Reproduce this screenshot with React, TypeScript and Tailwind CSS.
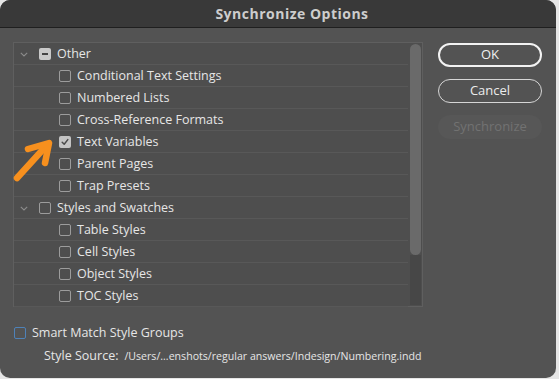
import React from 'react';

type Row = { label: string; level: 0 | 1; state: 'none' | 'checked' | 'mixed' };

const rows: Row[] = [
  { label: 'Other', level: 0, state: 'mixed' },
  { label: 'Conditional Text Settings', level: 1, state: 'none' },
  { label: 'Numbered Lists', level: 1, state: 'none' },
  { label: 'Cross-Reference Formats', level: 1, state: 'none' },
  { label: 'Text Variables', level: 1, state: 'checked' },
  { label: 'Parent Pages', level: 1, state: 'none' },
  { label: 'Trap Presets', level: 1, state: 'none' },
  { label: 'Styles and Swatches', level: 0, state: 'none' },
  { label: 'Table Styles', level: 1, state: 'none' },
  { label: 'Cell Styles', level: 1, state: 'none' },
  { label: 'Object Styles', level: 1, state: 'none' },
  { label: 'TOC Styles', level: 1, state: 'none' },
];

const Box = ({ state }: { state: Row['state'] }) => {
  if (state === 'mixed')
    return (
      <span className="w-[12px] h-[12px] rounded-[2px] bg-[#c9c9c9] flex items-center justify-center">
        <span className="w-[6px] h-[2px] bg-[#444]" />
      </span>
    );
  if (state === 'checked')
    return (
      <span className="w-[12px] h-[12px] rounded-[2px] bg-[#c4c4c4] flex items-center justify-center">
        <svg width="8" height="8" viewBox="0 0 8 8">
          <path d="M1.2 4.2 L3.2 6.2 L6.8 1.6" fill="none" stroke="#4a4a4a" strokeWidth="1.5" strokeLinecap="round" strokeLinejoin="round" />
        </svg>
      </span>
    );
  return <span className="w-[12px] h-[12px] rounded-[2px] border border-[#9c9c9c]" />;
};

const Chevron = () => (
  <svg width="8" height="5" viewBox="0 0 8 5" className="shrink-0">
    <path d="M0.8 0.8 L4 4 L7.2 0.8" fill="none" stroke="#8c8c8c" strokeWidth="1.1" />
  </svg>
);

export default function App() {
  return (
    <div className="w-[559px] h-[379px] bg-[#e6e6e6] relative" style={{ fontFamily: '"Open Sans", sans-serif' }}>
      <div className="w-[556px] h-[378px] rounded-[10px] overflow-hidden bg-[#535353] flex flex-col">
        {/* title bar */}
        <div className="h-[28px] bg-[#393939] border-b border-[#1f1f1f] flex items-center justify-center shrink-0">
          <span className="text-[14px] font-bold tracking-[0.5px] text-[#cdcdcd] pl-[28px]">Synchronize Options</span>
        </div>

        <div className="flex pl-[13px] pt-[14px] gap-[15px]">
          {/* list */}
          <div className="w-[410px] h-[265px] border border-[#5f5f5f] bg-[#4e4e4e] flex">
            <div className="flex-1 flex flex-col">
              {rows.map((r) => (
                <div key={r.label} className="h-[22px] shrink-0 border-b border-[#585858] flex items-center pt-[1px] text-[12.5px] text-[#e6e6e6]">
                  {r.level === 0 ? (
                    <>
                      <span className="w-[25px] pl-[6px] flex items-center"><Chevron /></span>
                      <Box state={r.state} />
                      <span className="ml-[6px]">{r.label}</span>
                    </>
                  ) : (
                    <>
                      <span className="w-[45px]" />
                      <Box state={r.state} />
                      <span className="ml-[6px]">{r.label}</span>
                    </>
                  )}
                </div>
              ))}
            </div>
            <div className="w-[14px] flex flex-col pl-[2px] pr-[1px] py-[1px]">
              <div className="h-[211px] rounded-full bg-[#6a6a6a]" />
              <div className="flex-1 bg-[#474747]" />
            </div>
          </div>

          {/* buttons */}
          <div className="w-[104px] flex flex-col gap-[12px] pt-[1px]">
            <button className="h-[24px] rounded-full border-2 border-[#f2f2f2] text-[13px] text-[#f0f0f0] flex items-center justify-center">OK</button>
            <button className="h-[24px] rounded-full border border-[#d6d6d6] text-[13px] text-[#ececec] flex items-center justify-center">Cancel</button>
            <button className="h-[24px] rounded-full bg-[#575757] text-[13px] text-[#727272] flex items-center justify-center">Synchronize</button>
          </div>
        </div>

        <div className="pl-[14px] pt-[17px] flex items-center gap-[6px] text-[12.5px] text-[#e6e6e6]">
          <span className="w-[12px] h-[12px] rounded-[2px] border border-[#4f82b8]" />
          <span>Smart Match Style Groups</span>
        </div>
        <div className="pl-[44px] pt-[4px] flex items-baseline gap-[6px] text-[#e6e6e6]">
          <span className="text-[12.5px]">Style Source:</span>
          <span className="text-[10.6px]">/Users/...enshots/regular answers/Indesign/Numbering.indd</span>
        </div>
      </div>

      {/* orange arrow */}
      <svg className="absolute left-0 top-0 pointer-events-none" width="70" height="200" viewBox="0 0 70 200">
        <g fill="none" stroke="#f7901e" strokeWidth="6.5" strokeLinecap="round" strokeLinejoin="round">
          <path d="M17 178 L47 145" />
          <path d="M28 149 L49 143 L45 163" />
        </g>
      </svg>
    </div>
  );
}
